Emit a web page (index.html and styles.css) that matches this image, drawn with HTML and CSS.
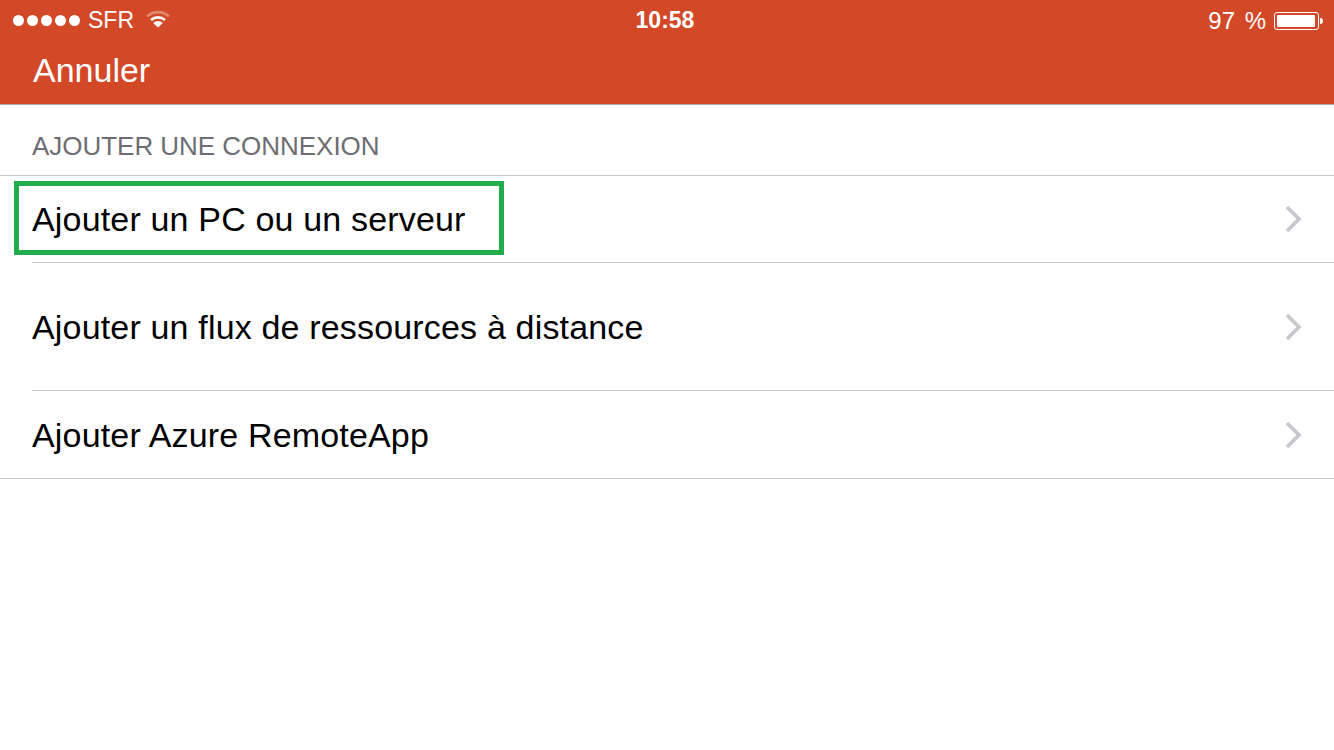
FILE: index.html
```html
<!DOCTYPE html>
<html lang="fr">

<head>
	<meta charset="UTF-8">
	<title>Ajouter une connexion</title>
	<link rel="stylesheet" href="styles.css">
</head>

<body>
	<div class="header">
		<div class="status-bar">
			<div class="status-left">
				<div class="signal">
					<span class="dot"></span><span class="dot"></span><span class="dot"></span><span class="dot"></span><span class="dot"></span>
				</div>
				<span class="carrier">SFR</span>
				<svg class="wifi" width="26" height="18" viewBox="0 0 26 18">
					<path d="M2 6.5 A16 16 0 0 1 24 6.5" fill="none" stroke="#fff" stroke-opacity="0.35" stroke-width="2.6"/>
					<path d="M6 10 A10.5 10.5 0 0 1 20 10" fill="none" stroke="#fff" stroke-width="2.6"/>
					<path d="M8.2 13 L13 17.5 L17.8 13 A7 7 0 0 0 8.2 13 Z" fill="#fff"/>
				</svg>
			</div>
			<div class="clock">10:58</div>
			<div class="status-right">
				<span class="percent">97 %</span>
				<div class="battery"><div class="battery-level"></div></div>
				<div class="battery-tip"></div>
			</div>
		</div>
		<div class="nav-bar">Annuler</div>
	</div>

	<div class="section-title">AJOUTER UNE CONNEXION</div>

	<div class="list">
		<div class="row row-first">
			<span>Ajouter un PC ou un serveur</span>
			<svg class="chevron" width="20" height="30" viewBox="0 0 20 30"><path d="M3 3 L15 15 L3 27" fill="none" stroke="#c7c7cc" stroke-width="3.6"/></svg>
			<div class="highlight"></div>
		</div>
		<div class="row row-tall">
			<span class="row-label">Ajouter un flux de ressources à distance</span>
			<svg class="chevron" width="20" height="30" viewBox="0 0 20 30"><path d="M3 3 L15 15 L3 27" fill="none" stroke="#c7c7cc" stroke-width="3.6"/></svg>
		</div>
		<div class="row row-last">
			<span class="row-label">Ajouter Azure RemoteApp</span>
			<svg class="chevron" width="20" height="30" viewBox="0 0 20 30"><path d="M3 3 L15 15 L3 27" fill="none" stroke="#c7c7cc" stroke-width="3.6"/></svg>
		</div>
	</div>
</body>

</html>
```

FILE: styles.css
```css
body {
	margin: 0;
	background-color: white;
	font-family: 'Liberation Sans', Arial, sans-serif;
	color: black;
}

.header {
	height: 104px;
	background-color: #d34826;
	border-bottom: 1px solid #b0a9a6;
	color: white;
}

.status-bar {
	display: flex;
	justify-content: space-between;
	align-items: center;
	height: 41px;
	padding: 0 11px 0 13px;
	position: relative;
}

.status-left {
	display: flex;
	align-items: center;
}

.signal {
	display: flex;
	gap: 3px;
	margin-right: 8px;
}

.dot {
	width: 11px;
	height: 11px;
	border-radius: 50%;
	background-color: white;
}

.carrier {
	font-size: 23px;
	margin-right: 11px;
}

.wifi {
	margin-top: -3px;
}

.clock {
	position: absolute;
	left: 0;
	right: 4px;
	text-align: center;
	font-size: 23px;
	font-weight: bold;
}

.status-right {
	display: flex;
	align-items: center;
}

.percent {
	font-size: 24px;
	word-spacing: 3px;
	margin-right: 8px;
}

.battery {
	width: 45px;
	height: 18px;
	border: 1px solid white;
	border-radius: 3px;
	padding: 2px;
	box-sizing: border-box;
}

.battery-level {
	height: 100%;
	width: 97%;
	background-color: white;
	border-radius: 1px;
}

.battery-tip {
	width: 3px;
	height: 6px;
	margin-left: 1px;
	background-color: white;
	border-radius: 0 3px 3px 0;
}

.nav-bar {
	padding-left: 33px;
	font-size: 34px;
	line-height: 58px;
}

.section-title {
	height: 71px;
	padding-left: 32px;
	box-sizing: border-box;
	font-size: 26px;
	letter-spacing: -0.03px;
	line-height: 83px;
	color: #6d6d72;
	border-bottom: 1px solid #c8c7cc;
}

.row {
	display: flex;
	justify-content: space-between;
	align-items: center;
	margin-left: 32px;
	padding-right: 30px;
	font-size: 34px;
	letter-spacing: 0.17px;
	border-bottom: 1px solid #c8c7cc;
	position: relative;
}

.row-first {
	height: 86px;
}

.row-tall {
	height: 127px;
}

.row-last {
	height: 87px;
	margin-left: 0;
	padding-left: 32px;
}

.row-label {
	padding-top: 1px;
}

.highlight {
	position: absolute;
	left: -18px;
	top: 5px;
	width: 490px;
	height: 74px;
	box-sizing: border-box;
	border: 5px solid #21ac4e;
}
```
